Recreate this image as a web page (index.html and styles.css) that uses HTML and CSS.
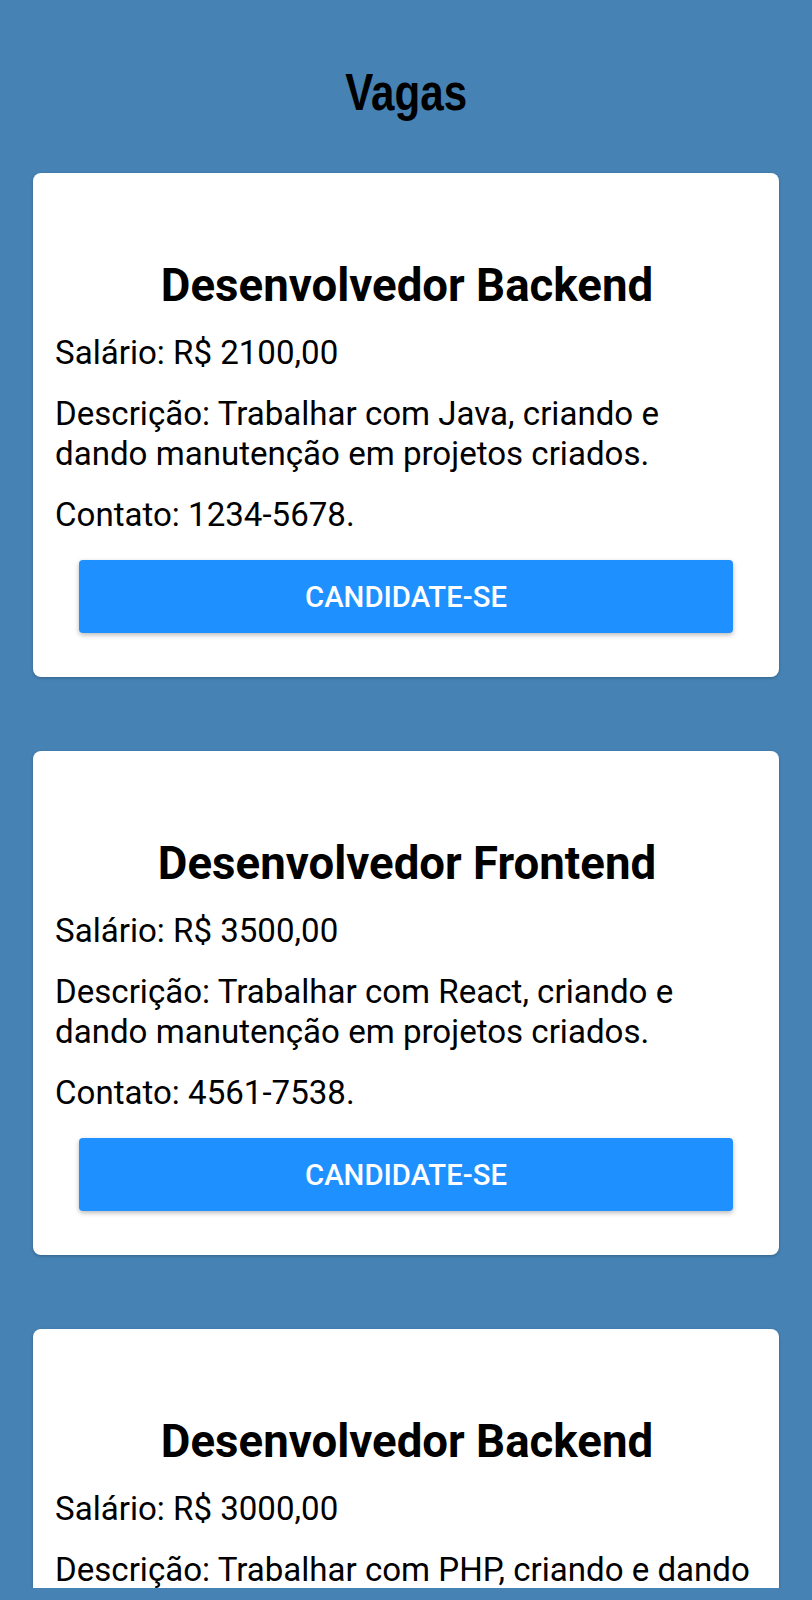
FILE: index.html
```html
<!DOCTYPE html>
<html lang="pt-BR">
<head>
<meta charset="utf-8">
<title>Vagas</title>
<link rel="stylesheet" href="styles.css">
</head>
<body>
<div class="screen">
  <header class="title"><span class="title-text">Vagas</span></header>
  <main class="list">
    <article class="card">
      <h2 class="card-title">Desenvolvedor Backend</h2>
      <p class="card-line">Salário: R$ 2100,00</p>
      <p class="card-line">Descrição: Trabalhar com Java, criando e dando manutenção em projetos criados.</p>
      <p class="card-line">Contato: 1234-5678.</p>
      <button class="apply">CANDIDATE-SE</button>
    </article>
    <article class="card">
      <h2 class="card-title">Desenvolvedor Frontend</h2>
      <p class="card-line">Salário: R$ 3500,00</p>
      <p class="card-line">Descrição: Trabalhar com React, criando e dando manutenção em projetos criados.</p>
      <p class="card-line">Contato: 4561-7538.</p>
      <button class="apply">CANDIDATE-SE</button>
    </article>
    <article class="card">
      <h2 class="card-title">Desenvolvedor Backend</h2>
      <p class="card-line">Salário: R$ 3000,00</p>
      <p class="card-line">Descrição: Trabalhar com PHP, criando e dando manutenção em projetos criados.</p>
      <p class="card-line">Contato: 9876-5432.</p>
      <button class="apply">CANDIDATE-SE</button>
    </article>
  </main>
</div>
</body>
</html>
```

FILE: styles.css
```css
html, body {
  margin: 0;
  padding: 0;
  background: #4682b4;
}

.screen {
  height: 1588px;
  overflow: hidden;
  font-family: Roboto, "Noto Sans", sans-serif;
  color: #000;
}

.title {
  padding-top: 62px;
  height: 60px;
  line-height: 60px;
  text-align: center;
}

.title-text {
  display: inline-block;
  font-family: "Liberation Sans", Arial, sans-serif;
  font-weight: 700;
  font-size: 52px;
  transform: scaleX(0.81);
}

.list {
  display: flex;
  flex-direction: column;
  gap: 74px;
  padding: 51px 33px 0;
}

.card {
  background: #fff;
  border-radius: 8px;
  box-shadow: 0 1px 3px rgba(0, 0, 0, 0.25);
  padding: 87px 20px 44px 22px;
  display: flex;
  flex-direction: column;
  gap: 21px;
}

.card-title {
  margin: 0;
  font-size: 45.6px;
  line-height: 52px;
  font-weight: 700;
  text-align: center;
}

.card-line {
  margin: 0;
  font-size: 33.1px;
  line-height: 40px;
}

.apply {
  margin: 4px 26px 0 24px;
  height: 73px;
  border: none;
  border-radius: 4px;
  background: #1e90ff;
  color: #fff;
  font-family: Roboto, sans-serif;
  font-weight: 500;
  font-size: 29.3px;
  box-shadow: 0 2px 5px rgba(0, 0, 0, 0.28);
}
```
